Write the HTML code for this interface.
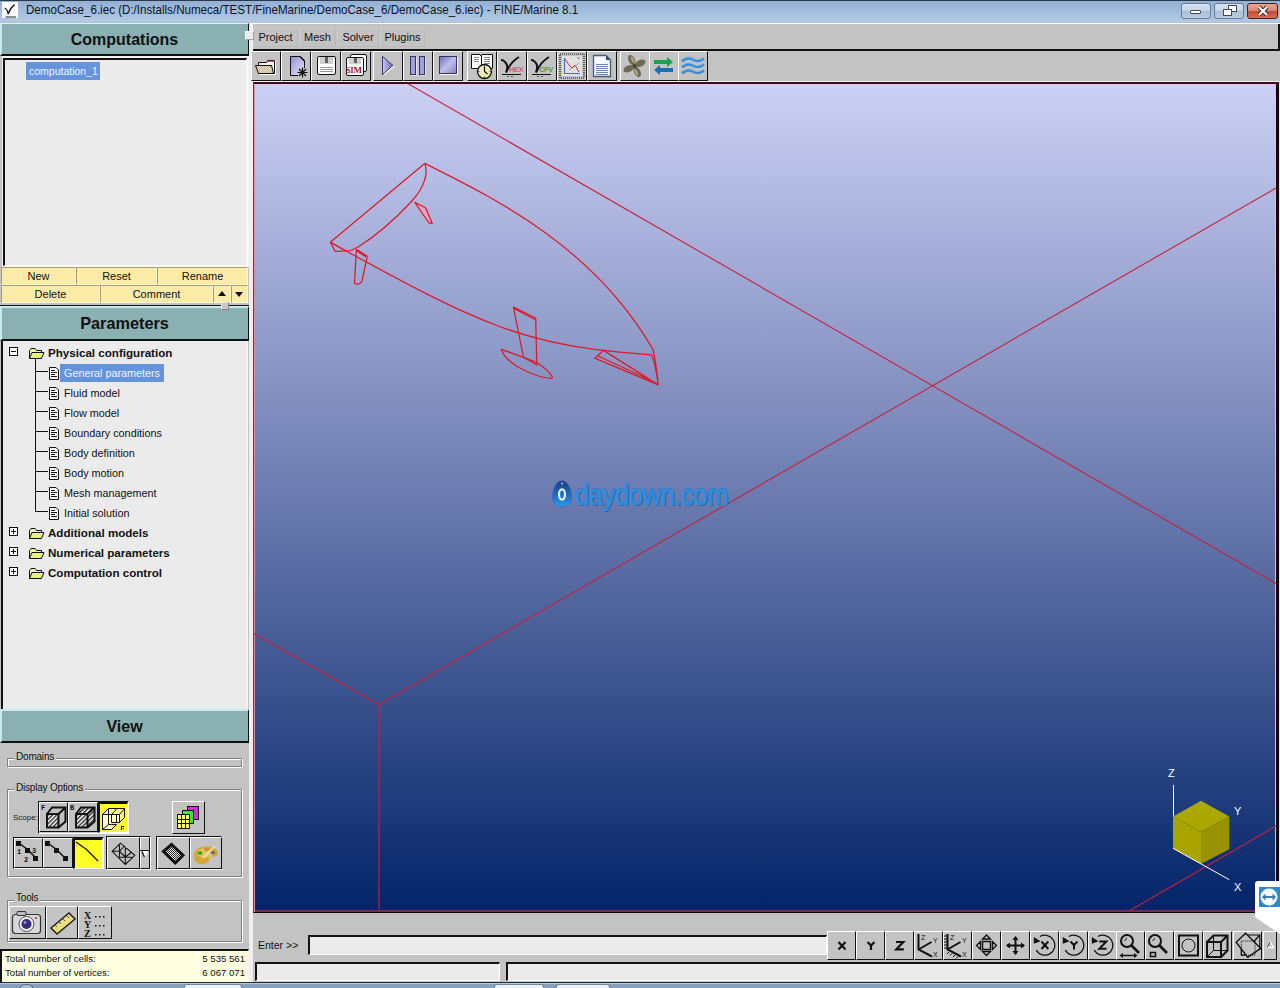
<!DOCTYPE html>
<html><head><meta charset="utf-8">
<style>
*{margin:0;padding:0;box-sizing:border-box}
html,body{width:1280px;height:988px;overflow:hidden;background:#c3c3c3;font-family:"Liberation Sans",sans-serif;position:relative}
.a{position:absolute}
.t{position:absolute;white-space:nowrap;color:#111;font-size:11px;line-height:13px}
.yb{position:absolute;height:18px;background:#fdeba8;border-top:1px solid #a89c70;border-left:1px solid #a89c70;border-right:1px solid #fff8d8;border-bottom:1px solid #fff8d8;font-size:11px;line-height:16px;text-align:center;color:#111}
.gb{position:absolute;border:1px solid #808080;box-shadow:inset 1px 1px 0 #fff,1px 1px 0 #fff}
.mi{position:absolute;top:27px;height:20px;border:1px solid #cdcdcd;border-right-color:#bababa;border-bottom-color:#bababa;font-size:11px;line-height:18px;text-align:center;color:#111}
.tb{position:absolute;top:51px;width:30px;height:30px;background:#c3c3c3;border-top:1px solid #fff;border-left:1px solid #fff;border-right:1px solid #111;border-bottom:1px solid #111;box-shadow:inset -1px -1px 0 #808080}
.cb{position:absolute;top:930px;width:29px;height:30px;background:#c3c3c3;border-top:1px solid #fff;border-left:1px solid #fff;border-right:1px solid #111;border-bottom:1px solid #111;box-shadow:inset -1px -1px 0 #808080}
.ib{position:absolute;background:#c3c3c3;border-top:1px solid #fff;border-left:1px solid #fff;border-right:1px solid #111;border-bottom:1px solid #111;box-shadow:inset -1px -1px 0 #808080}
.ib svg,.tb svg,.cb svg{position:absolute;left:0;top:0}
</style></head><body>

<!-- TITLE BAR -->
<div class="a" style="left:0;top:0;width:1280px;height:23px;background:linear-gradient(#93b0d2,#a2bcdc 45%,#b4cbe6);border-top:1px solid #2a3a4c"></div>
<div class="a" style="left:2px;top:2px;width:16px;height:16px;background:#fff"></div>
<svg class="a" style="left:2px;top:2px" width="16" height="16"><path d="M2.5 6 C4 6.5 5.5 8.5 6.5 12" stroke="#111" stroke-width="1.3" fill="none"/><path d="M6 12 C7.5 8 9.5 5 12.5 2.5" stroke="#111" stroke-width="1.6" fill="none"/><path d="M3.5 15 H14" stroke="#333" stroke-width="1.1"/></svg>
<div class="t" style="left:26px;top:3px;font-size:11.9px;line-height:14px;color:#0c1424;transform:scaleX(0.975);transform-origin:0 0">DemoCase_6.iec (D:/Installs/Numeca/TEST/FineMarine/DemoCase_6/DemoCase_6.iec) - FINE/Marine 8.1</div>
<!-- window buttons -->
<div class="a" style="left:1181px;top:3px;width:30px;height:16px;border:1px solid #6a7c94;border-radius:3px;background:linear-gradient(#d6e2f0 0%,#c8d8ea 45%,#a8bed8 50%,#b8cce2 100%)"></div>
<div class="a" style="left:1190px;top:10px;width:11px;height:4px;background:#fff;border:1px solid #404a58;border-radius:1px"></div>
<div class="a" style="left:1214px;top:3px;width:30px;height:16px;border:1px solid #6a7c94;border-radius:3px;background:linear-gradient(#d6e2f0 0%,#c8d8ea 45%,#a8bed8 50%,#b8cce2 100%)"></div>
<div class="a" style="left:1228px;top:5px;width:9px;height:7px;background:#fff;border:1px solid #404a58"></div>
<div class="a" style="left:1223px;top:9px;width:9px;height:7px;background:#fff;border:1px solid #404a58"></div>
<div class="a" style="left:1247px;top:3px;width:31px;height:16px;border:1px solid #4a2018;border-radius:3px;background:linear-gradient(#e8a498 0%,#dc8a78 45%,#c64a30 55%,#d8705a 100%)"></div>
<svg class="a" style="left:1255px;top:5px" width="16" height="12"><path d="M4 2 L12 10 M12 2 L4 10" stroke="#3a1a14" stroke-width="4"/><path d="M4 2 L12 10 M12 2 L4 10" stroke="#fff" stroke-width="2.4"/></svg>

<!-- SPLITTER -->
<div class="a" style="left:249px;top:23px;width:4px;height:959px;background:#efefef;border-right:1px solid #fbeaea"></div>


<!-- MENU BAR -->
<div class="a" style="left:253px;top:23px;width:1027px;height:28px;background:#c3c3c3;border-top:1px solid #f4f4f4;border-bottom:2px solid #111;border-right:2px solid #111"></div>
<div class="mi" style="left:253px;width:45px">Project</div>
<div class="mi" style="left:299px;width:37px">Mesh</div>
<div class="mi" style="left:337px;width:42px">Solver</div>
<div class="mi" style="left:380px;width:45px">Plugins</div>

<!-- TOOLBAR -->
<div class="a" style="left:253px;top:51px;width:1027px;height:31px;background:#c3c3c3"></div>

<!-- TOOLBAR BUTTONS -->
<div class="a" style="left:251px;top:51px;width:30px;height:30px;background:#c3c3c3;border-top:1px solid #fff;border-left:1px solid #fff;border-right:1px solid #111;border-bottom:1px solid #111"></div><svg class="a" style="left:251px;top:51px" width="30" height="30"><defs><pattern id="chk" width="2" height="2" patternUnits="userSpaceOnUse"><rect width="2" height="2" fill="#e8dcc8"/><rect width="1" height="1" fill="#c8b8a0"/><rect x="1" y="1" width="1" height="1" fill="#c8b8a0"/></pattern></defs>
<path d="M8.5 23.5 H24.5 V10" stroke="#fff" fill="none"/><path d="M7.5 14.5 V11.5 H15.5 L16.5 10 H23.5 V22.5 H7.5 Z" fill="#f4f0ea" stroke="#111"/><path d="M16.5 9.5 H23.5" stroke="#6a2828" stroke-width="1.3"/>
<path d="M4.5 14.5 H20.5 L22.5 22.5 H7.5 Z" fill="url(#chk)" stroke="#111"/></svg>
<div class="a" style="left:281px;top:51px;width:30px;height:30px;background:#c3c3c3;border-top:1px solid #fff;border-left:1px solid #fff;border-right:1px solid #111;border-bottom:1px solid #111"></div><svg class="a" style="left:281px;top:51px" width="30" height="30"><defs><linearGradient id="ndg" x1="0" y1="0" x2="1" y2="1"><stop offset="0" stop-color="#9090d0"/><stop offset="1" stop-color="#e8e8ff"/></linearGradient></defs>
<path d="M9.5 5.5 H19 L23.5 10 V24.5 H9.5 Z" fill="url(#ndg)" stroke="#111"/><path d="M19 5.5 L23.5 10" stroke="#111" stroke-width="1.5"/>
<rect x="17" y="17" width="9" height="9" fill="#c3c3c3"/><path d="M21.5 16.5 V26.5 M16.5 21.5 H26.5 M18 18 L25 25 M25 18 L18 25" stroke="#111" stroke-width="1.2"/></svg>
<div class="a" style="left:311px;top:51px;width:30px;height:30px;background:#c3c3c3;border-top:1px solid #fff;border-left:1px solid #fff;border-right:1px solid #111;border-bottom:1px solid #111"></div><svg class="a" style="left:311px;top:51px" width="30" height="30"><rect x="6.5" y="5.5" width="18" height="18" rx="1.5" fill="#fff" stroke="#111"/><rect x="9" y="6" width="13" height="7" fill="#d0d0d0"/><rect x="14" y="6" width="3" height="6" fill="#606060"/><path d="M9 16.5 H22 M9 18.5 H22 M9 20.5 H22" stroke="#999"/></svg>
<div class="a" style="left:341px;top:51px;width:30px;height:30px;background:#c3c3c3;border-top:1px solid #fff;border-left:1px solid #fff;border-right:1px solid #111;border-bottom:1px solid #111"></div><svg class="a" style="left:341px;top:51px" width="30" height="30"><rect x="9.5" y="3.5" width="16" height="17" rx="1.5" fill="#fff" stroke="#111"/><rect x="5.5" y="6.5" width="17" height="18" rx="1.5" fill="#fff" stroke="#111"/><rect x="8" y="7" width="12" height="6" fill="#d0d0d0"/><rect x="13" y="7" width="3" height="5" fill="#606060"/>
<text x="4.5" y="22" font-family="Liberation Serif" font-weight="bold" font-size="9" fill="#9a1830" letter-spacing="-0.3">SIM</text></svg>
<div class="a" style="left:373px;top:51px;width:30px;height:30px;background:#c3c3c3;border-top:1px solid #fff;border-left:1px solid #fff;border-right:1px solid #111;border-bottom:1px solid #111"></div><svg class="a" style="left:373px;top:51px" width="30" height="30"><defs><linearGradient id="pg" x1="0" y1="0" x2="1" y2="0"><stop offset="0" stop-color="#c8c8f0"/><stop offset="1" stop-color="#6a6aa8"/></linearGradient></defs>
<path d="M10 7 L20.5 14.5 L10 23 Z" fill="#fff" transform="translate(1,1)"/><path d="M9.5 5.5 L20 14.5 L9.5 23.5 Z" fill="url(#pg)" stroke="#33336a"/></svg>
<div class="a" style="left:403px;top:51px;width:30px;height:30px;background:#c3c3c3;border-top:1px solid #fff;border-left:1px solid #fff;border-right:1px solid #111;border-bottom:1px solid #111"></div><svg class="a" style="left:403px;top:51px" width="30" height="30"><rect x="8.5" y="6.5" width="5" height="18" fill="#fff"/><rect x="17.5" y="6.5" width="5" height="18" fill="#fff"/><rect x="7.5" y="5.5" width="5" height="18" fill="#9ea0d8" stroke="#33336a"/><rect x="16.5" y="5.5" width="5" height="18" fill="#9ea0d8" stroke="#33336a"/></svg>
<div class="a" style="left:433px;top:51px;width:30px;height:30px;background:#c3c3c3;border-top:1px solid #fff;border-left:1px solid #fff;border-right:1px solid #111;border-bottom:1px solid #111"></div><svg class="a" style="left:433px;top:51px" width="30" height="30"><defs><linearGradient id="sg" x1="0" y1="0" x2="1" y2="1"><stop offset="0" stop-color="#6a6aa8"/><stop offset="0.5" stop-color="#c0c0ee"/><stop offset="1" stop-color="#8080c0"/></linearGradient></defs>
<rect x="7" y="6" width="18" height="18" fill="#fff"/><rect x="6.5" y="5.5" width="17" height="17" fill="url(#sg)" stroke="#33336a"/></svg>
<div class="a" style="left:467px;top:51px;width:30px;height:30px;background:#c3c3c3;border-top:1px solid #fff;border-left:1px solid #fff;border-right:1px solid #111;border-bottom:1px solid #111"></div><svg class="a" style="left:467px;top:51px" width="30" height="30"><path d="M4.5 3.5 H13 L14 5 L15 3.5 H25.5 V17.5 H4.5 Z" fill="#fff" stroke="#111"/><path d="M14.5 5 V17" stroke="#111"/><path d="M7 6.5 H12 M7 8.5 H12 M7 10.5 H12 M17 6.5 H23 M17 8.5 H23 M17 10.5 H23 M17 12.5 H23" stroke="#888"/>
<circle cx="17.5" cy="20.5" r="7" fill="#eeeab0" stroke="#111" stroke-width="1.3"/><path d="M17.5 15.5 V20.5 L20.5 23" stroke="#111" stroke-width="1.2" fill="none"/><circle cx="17.5" cy="14.8" r=".6" fill="#111"/><circle cx="23.2" cy="20.5" r=".6" fill="#111"/><circle cx="11.8" cy="20.5" r=".6" fill="#111"/><circle cx="17.5" cy="26.2" r=".6" fill="#111"/></svg>
<div class="a" style="left:497px;top:51px;width:30px;height:30px;background:#c3c3c3;border-top:1px solid #fff;border-left:1px solid #fff;border-right:1px solid #111;border-bottom:1px solid #111"></div><svg class="a" style="left:497px;top:51px" width="30" height="30"><path d="M4 9 C6 9 8 10 10 14 C10.5 16 10 19 9 21.5 C11 17 15 10 22 6" stroke="#111" stroke-width="2" fill="none"/>
<text x="12" y="21" font-family="Liberation Sans" font-weight="bold" font-size="7.5" fill="#d86070" letter-spacing="-0.4">HEX</text><path d="M5 23.5 H24" stroke="#111" stroke-width="1"/><path d="M10 25.5 H12 M14 25.5 H16" stroke="#555"/></svg>
<div class="a" style="left:527px;top:51px;width:30px;height:30px;background:#c3c3c3;border-top:1px solid #fff;border-left:1px solid #fff;border-right:1px solid #111;border-bottom:1px solid #111"></div><svg class="a" style="left:527px;top:51px" width="30" height="30"><path d="M4 9 C6 9 8 10 10 14 C10.5 16 10 19 9 21.5 C11 17 15 10 22 6" stroke="#111" stroke-width="2" fill="none"/>
<text x="12" y="21" font-family="Liberation Sans" font-weight="bold" font-size="7.5" fill="#5a9a40" letter-spacing="-0.4">CFV</text><path d="M5 23.5 H24" stroke="#111" stroke-width="1"/><path d="M10 25.5 H12 M14 25.5 H16" stroke="#555"/></svg>
<div class="a" style="left:557px;top:51px;width:30px;height:30px;background:#c3c3c3;border-top:1px solid #fff;border-left:1px solid #fff;border-right:1px solid #111;border-bottom:1px solid #111"></div><svg class="a" style="left:557px;top:51px" width="30" height="30"><rect x="3" y="3" width="24" height="24" fill="none" stroke="#111" stroke-width="1.2" stroke-dasharray="1 1"/><rect x="5" y="5" width="20" height="20" fill="#e0e0e0"/><path d="M7.5 7 V22.5 H23" stroke="#4a6ac8" stroke-width="1.2" fill="none"/><path d="M8 8 L12 14 L15 17 L18 14 L22 21" stroke="#d03030" stroke-width="1" fill="none"/><path d="M12 19 L17 16 L22 12" stroke="#a0a0a0" fill="none"/><path d="M20 7 H23" stroke="#777"/></svg>
<div class="a" style="left:587px;top:51px;width:30px;height:30px;background:#c3c3c3;border-top:1px solid #fff;border-left:1px solid #fff;border-right:1px solid #111;border-bottom:1px solid #111"></div><svg class="a" style="left:587px;top:51px" width="30" height="30"><path d="M6.5 4.5 H19 L23.5 9 V25.5 H6.5 Z" fill="#f4f8ff" stroke="#4a5a7a" stroke-width="1.3"/><path d="M19 4.5 V9 H23.5 Z" fill="#2a4a8a"/><path d="M9 13.5 H21 M9 15.5 H21 M9 17.5 H21 M9 19.5 H21 M9 21.5 H21 M9 23.5 H21" stroke="#6a88b8" stroke-width="1"/></svg>
<div class="a" style="left:620px;top:51px;width:30px;height:30px;background:#c3c3c3;border-top:1px solid #fff;border-left:1px solid #fff;border-right:1px solid #111;border-bottom:1px solid #111"></div><svg class="a" style="left:620px;top:51px" width="30" height="30"><g transform="rotate(-25 14.5 15)"><g fill="#6e6a52"><ellipse cx="14.5" cy="8.5" rx="3.2" ry="5.5"/><ellipse cx="14.5" cy="21.5" rx="3.2" ry="5.5"/><ellipse cx="8" cy="15" rx="5.5" ry="3.2"/><ellipse cx="21" cy="15" rx="5.5" ry="3.2"/></g><g fill="#aca68a"><ellipse cx="15.5" cy="8.5" rx="1.3" ry="3.5"/><ellipse cx="13.5" cy="21.5" rx="1.3" ry="3.5"/></g></g><circle cx="14.5" cy="15" r="2" fill="#4a4630"/></svg>
<div class="a" style="left:649px;top:51px;width:30px;height:30px;background:#c3c3c3;border-top:1px solid #fff;border-left:1px solid #fff;border-right:1px solid #111;border-bottom:1px solid #111"></div><svg class="a" style="left:649px;top:51px" width="30" height="30"><path d="M5 9 H18 V6 L24 11 L18 16 V13 H5 Z" fill="#1aa050"/><path d="M24 17 H11 V14 L5 19 L11 24 V21 H24 Z" fill="#1a70b8"/></svg>
<div class="a" style="left:678px;top:51px;width:30px;height:30px;background:#c3c3c3;border-top:1px solid #fff;border-left:1px solid #fff;border-right:1px solid #111;border-bottom:1px solid #111"></div><svg class="a" style="left:678px;top:51px" width="30" height="30"><g stroke="#3a8cd4" stroke-width="3" fill="none" stroke-linecap="round"><path d="M5 9.5 C8 7 11 6.5 15 8.5 C19 10.5 22 10 25 8"/><path d="M5 15.5 C8 13 11 12.5 15 14.5 C19 16.5 22 16 25 14"/><path d="M5 21.5 C8 19 11 18.5 15 20.5 C19 22.5 22 22 25 20"/></g><g stroke="#80c4f8" stroke-width=".9" fill="none"><path d="M5 8.3 C8 5.8 11 5.3 15 7.3 C19 9.3 22 8.8 25 6.8"/><path d="M5 14.3 C8 11.8 11 11.3 15 13.3 C19 15.3 22 14.8 25 12.8"/><path d="M5 20.3 C8 17.8 11 17.3 15 19.3 C19 21.3 22 20.8 25 18.8"/></g></svg>

<div class="a" style="left:253px;top:81px;width:1026px;height:1px;background:#fcf4f4"></div>
<!-- VIEWPORT -->
<div class="a" style="left:253px;top:82px;width:1026px;height:831px;background:linear-gradient(#ccd0f4 0%,#6b7baf 50%,#032468 100%);border-top:2px solid #420818;border-left:1px solid #a82040;border-right:3px solid #1a0408;border-bottom:1px solid #080004;box-shadow:inset 0 1px 0 #e6c6e6,inset 1px 0 0 #d88aa8,inset -1px 0 0 #dcc0e0,inset 0 -2px 0 #7a2a4a"></div>
<div class="a" style="left:1279px;top:82px;width:1px;height:831px;background:#f8e0e0"></div>

<!-- VIEWPORT CONTENT -->
<svg class="a" style="left:254px;top:84px" width="1022" height="827" viewBox="254 84 1022 827">
<g stroke="#c8203c" stroke-width="1.1" fill="none">
<path d="M407.7 83.5 L1276 583.5"/>
<path d="M253 633 L379 704.5 L1276 188"/>
<path d="M379 704.5 V912"/>
<path d="M1129 911 L1276 826"/>
</g>
<g stroke="#dc1a28" stroke-width="1.25" fill="none" stroke-linejoin="round">
<!-- transom top edge -->
<path d="M424.7 163.4 L330.3 242.3 L335.2 251.4 L345.8 251"/>
<path d="M330.3 242.3 L345.8 251"/>
<!-- transom curve -->
<path d="M424.7 163.4 C428 172 426 186 411 202 C398 216 382 232 358 247 C353 250 349 251 345.8 251"/>
<!-- deck edge -->
<path d="M424.7 163.4 C489 195.8 592 243.9 653 349.5"/>
<!-- keel line -->
<path d="M330.3 242.3 C484.5 327.1 523.8 345.8 651.5 354.8"/>
<!-- bow -->
<path d="M653 349.5 C655.5 360 657 372 658.2 384.9 M651.5 354.8 C654 360 656.5 372 658.2 384.9"/>
<!-- bulb -->
<path d="M603.6 350.4 L594.7 358.2 L658.2 384.9 L603.6 350.4 M598 356 L650 380"/>
<!-- rudder -->
<path d="M356.4 249.4 L367.3 256.2 L362 281 C361 284 357 285 354.5 283 L356.4 249.4 M357 251 L366 257"/>
<!-- small fin -->
<path d="M414.8 202.4 L425.5 207.7 L432.3 223.6 L429 223 Z" fill="#e6a8c0"/>
<!-- keel fin -->
<path d="M513.4 307 L535.7 318 L536.8 364.9 L523.4 357 Z M514 308.5 L535 319.5"/>
<!-- fin bulb -->
<path d="M501.2 349.3 L536 362 C545 368 552 374 552.4 378.2 C545 379 530 374 518 367 C510 362 503 355 501.2 349.3 Z"/>
</g>
<!-- gizmo -->
<g>
<path d="M1201 800.7 L1229.3 816.5 L1201 832 L1173 816.5 Z" fill="#aaa800"/>
<path d="M1173 816.5 L1201 832 L1201 863.9 L1173 848.3 Z" fill="#a8a400"/>
<path d="M1229.3 816.5 L1229.3 849.3 L1201 863.9 L1201 832 Z" fill="#979300"/>
<path d="M1173.5 785 V816.5 M1173 848.3 L1229.3 879.7" stroke="#fff" stroke-width="1" fill="none"/>
<text x="1168" y="777" fill="#fff" font-size="11" font-family="Liberation Sans">Z</text>
<text x="1234" y="815" fill="#fff" font-size="11" font-family="Liberation Sans">Y</text>
<text x="1234" y="891" fill="#fff" font-size="11" font-family="Liberation Sans">X</text>
</g>
</svg>

<!-- WATERMARK -->
<svg class="a" style="left:550px;top:478px" width="22" height="31"><defs><linearGradient id="egg" x1="0" y1="0" x2="0" y2="1"><stop offset="0" stop-color="#16407e"/><stop offset="0.55" stop-color="#1f6cc0"/><stop offset="1" stop-color="#2e9ae8"/></linearGradient></defs><path d="M12 2.5 C6 2.5 2.5 12 2.5 19 C2.5 25.5 6.5 28.8 12 28.8 C17.5 28.8 21.8 25.5 21.8 19 C21.8 12 18 2.5 12 2.5 Z" fill="url(#egg)" stroke="#3a6ab0" stroke-width=".8"/><ellipse cx="12" cy="16.5" rx="3" ry="5.2" fill="none" stroke="#e0f2ff" stroke-width="2.2"/><circle cx="12" cy="5.5" r="1" fill="#e0a0e0"/></svg>
<div class="t" style="left:575px;top:479px;font-size:29px;line-height:32px;font-weight:normal;color:#2f92e2;letter-spacing:-0.6px;transform:scaleX(0.89);transform-origin:0 0;-webkit-text-stroke:0.9px #2f8ad8;text-shadow:1px 1px 0 #34589a,-0.6px -0.6px 0 #3a70b8">daydown.com</div>

<!-- COMMAND AREA -->
<div class="a" style="left:253px;top:913px;width:1027px;height:69px;background:#c3c3c3"></div>
<div class="t" style="left:258px;top:939px;font-size:10.5px">Enter &gt;&gt;</div>
<div class="a" style="left:308px;top:935px;width:519px;height:20px;background:#ebebeb;border-top:2px solid #111;border-left:2px solid #111;border-right:1px solid #fff;border-bottom:1px solid #fff"></div>
<div class="a" style="left:255px;top:962px;width:245px;height:19px;background:#ebebeb;border-top:2px solid #111;border-left:2px solid #111;border-right:1px solid #fff;border-bottom:1px solid #fff"></div>
<div class="a" style="left:506px;top:962px;width:774px;height:19px;background:#ebebeb;border-top:2px solid #111;border-left:2px solid #111;border-bottom:1px solid #fff"></div>

<!-- COMMAND BUTTONS -->
<div class="a" style="left:827px;top:931px;width:29px;height:29px;background:#c3c3c3;border-top:1px solid #fff;border-left:1px solid #fff;border-right:1px solid #111;border-bottom:1px solid #111"></div><svg class="a" style="left:827px;top:931px" width="29" height="29"><path d="M11.5 11 L18.5 18.5 M18.5 11 L11.5 18.5" stroke="#111" stroke-width="2.2" fill="none" stroke-linejoin="miter"/></svg>
<div class="a" style="left:856px;top:931px;width:29px;height:29px;background:#c3c3c3;border-top:1px solid #fff;border-left:1px solid #fff;border-right:1px solid #111;border-bottom:1px solid #111"></div><svg class="a" style="left:856px;top:931px" width="29" height="29"><path d="M11.5 11 L15 14.5 L18.5 11 M15 14.5 V19" stroke="#111" stroke-width="2.2" fill="none" stroke-linejoin="miter"/></svg>
<div class="a" style="left:885px;top:931px;width:29px;height:29px;background:#c3c3c3;border-top:1px solid #fff;border-left:1px solid #fff;border-right:1px solid #111;border-bottom:1px solid #111"></div><svg class="a" style="left:885px;top:931px" width="29" height="29"><path d="M11 11 H18.3 L11.3 18.3 H18.8" stroke="#111" stroke-width="2.2" fill="none" stroke-linejoin="miter"/></svg>
<div class="a" style="left:914px;top:931px;width:29px;height:29px;background:#c3c3c3;border-top:1px solid #fff;border-left:1px solid #fff;border-right:1px solid #111;border-bottom:1px solid #111"></div><svg class="a" style="left:914px;top:931px" width="29" height="29"><path d="M4.5 3 V18.5 L18 25.5 M4.5 18.5 L17.5 11" stroke="#111" stroke-width="2" fill="none"/><g font-family="Liberation Sans" font-size="7" fill="#111"><text x="7" y="9">Z</text><text x="19" y="12">Y</text><text x="19" y="26">X</text></g></svg>
<div class="a" style="left:943px;top:931px;width:29px;height:29px;background:#c3c3c3;border-top:1px solid #fff;border-left:1px solid #fff;border-right:1px solid #111;border-bottom:1px solid #111"></div><svg class="a" style="left:943px;top:931px" width="29" height="29"><path d="M4.5 3 V18.5 L18 25.5 M4.5 18.5 L17.5 11" stroke="#111" stroke-width="2" fill="none"/><g font-family="Liberation Sans" font-size="7" fill="#111"><text x="7" y="9">Z</text><text x="19" y="12">Y</text><text x="19" y="26">X</text></g><path d="M1 5 H4 M1 8 H4 M1 11 H4 M1 14 H4 M1 17 H4 M6 21 L4 23 M9 22.5 L7 24.5 M12 24 L10 26 M15 25.5 L13 27.5" stroke="#111" stroke-width="1"/></svg>
<div class="a" style="left:972px;top:931px;width:29px;height:29px;background:#c3c3c3;border-top:1px solid #fff;border-left:1px solid #fff;border-right:1px solid #111;border-bottom:1px solid #111"></div><svg class="a" style="left:972px;top:931px" width="29" height="29"><rect x="10.5" y="10.5" width="8" height="8" fill="none" stroke="#111" stroke-width="1.5"/><path d="M14.5 4 L18.5 8 H10.5 Z M14.5 24.5 L18.5 20.5 H10.5 Z M4.5 14.5 L8.5 10.5 V18.5 Z M24.5 14.5 L20.5 10.5 V18.5 Z" fill="none" stroke="#111" stroke-width="1.3"/></svg>
<div class="a" style="left:1001px;top:931px;width:29px;height:29px;background:#c3c3c3;border-top:1px solid #fff;border-left:1px solid #fff;border-right:1px solid #111;border-bottom:1px solid #111"></div><svg class="a" style="left:1001px;top:931px" width="29" height="29"><path d="M14.5 6 V23 M6 14.5 H23" stroke="#111" stroke-width="2"/><path d="M14.5 5 L11.5 9 H17.5 Z M14.5 24 L11.5 20 H17.5 Z M5 14.5 L9 11.5 V17.5 Z M24 14.5 L20 11.5 V17.5 Z" fill="#111"/></svg>
<div class="a" style="left:1030px;top:931px;width:29px;height:29px;background:#c3c3c3;border-top:1px solid #fff;border-left:1px solid #fff;border-right:1px solid #111;border-bottom:1px solid #111"></div><svg class="a" style="left:1030px;top:931px" width="29" height="29"><path d="M6.2 19.2 A10 10 0 1 0 9.9 5.5" fill="none" stroke="#111" stroke-width="1.3"/><path d="M3.8 6 L10.5 10.2 L3.8 12.7 Z" fill="#111"/><path d="M11.5 10.5 L18.3 18 M18.3 10.5 L11.5 18" stroke="#111" stroke-width="2" fill="none"/></svg>
<div class="a" style="left:1059px;top:931px;width:29px;height:29px;background:#c3c3c3;border-top:1px solid #fff;border-left:1px solid #fff;border-right:1px solid #111;border-bottom:1px solid #111"></div><svg class="a" style="left:1059px;top:931px" width="29" height="29"><path d="M6.2 19.2 A10 10 0 1 0 9.9 5.5" fill="none" stroke="#111" stroke-width="1.3"/><path d="M3.8 6 L10.5 10.2 L3.8 12.7 Z" fill="#111"/><path d="M11.5 10.5 L15 14 L18.5 10.5 M15 14 V18.5" stroke="#111" stroke-width="2" fill="none"/></svg>
<div class="a" style="left:1088px;top:931px;width:29px;height:29px;background:#c3c3c3;border-top:1px solid #fff;border-left:1px solid #fff;border-right:1px solid #111;border-bottom:1px solid #111"></div><svg class="a" style="left:1088px;top:931px" width="29" height="29"><path d="M6.2 19.2 A10 10 0 1 0 9.9 5.5" fill="none" stroke="#111" stroke-width="1.3"/><path d="M3.8 6 L10.5 10.2 L3.8 12.7 Z" fill="#111"/><path d="M11.3 10.5 H18.3 L11.3 17.8 H18.5" stroke="#111" stroke-width="2" fill="none"/></svg>
<div class="a" style="left:1116px;top:931px;width:29px;height:29px;background:#c3c3c3;border-top:1px solid #fff;border-left:1px solid #fff;border-right:1px solid #111;border-bottom:1px solid #111"></div><svg class="a" style="left:1116px;top:931px" width="29" height="29"><circle cx="11" cy="10" r="6" fill="none" stroke="#111" stroke-width="2"/><path d="M8.5 10 L11 7" stroke="#111" stroke-width="1"/><path d="M15 14 L23 22" stroke="#111" stroke-width="2.6"/><path d="M5 24.5 H20" stroke="#111" stroke-width="1.5"/><path d="M3.5 24.5 L7 22 V27 Z M21.5 24.5 L18 22 V27 Z" fill="#111"/></svg>
<div class="a" style="left:1145px;top:931px;width:29px;height:29px;background:#c3c3c3;border-top:1px solid #fff;border-left:1px solid #fff;border-right:1px solid #111;border-bottom:1px solid #111"></div><svg class="a" style="left:1145px;top:931px" width="29" height="29"><circle cx="10" cy="10" r="6" fill="none" stroke="#111" stroke-width="2"/><path d="M7.5 10 L10 7" stroke="#111" stroke-width="1"/><path d="M14 14 L22 22" stroke="#111" stroke-width="2.6"/><rect x="5.5" y="21.5" width="5" height="4" fill="none" stroke="#111" stroke-width="1.5"/></svg>
<div class="a" style="left:1174px;top:931px;width:29px;height:29px;background:#c3c3c3;border-top:1px solid #fff;border-left:1px solid #fff;border-right:1px solid #111;border-bottom:1px solid #111"></div><svg class="a" style="left:1174px;top:931px" width="29" height="29"><rect x="5" y="4.5" width="19" height="20" fill="none" stroke="#111" stroke-width="2"/><circle cx="14.5" cy="14.5" r="6.5" fill="none" stroke="#111" stroke-width="1"/></svg>
<div class="a" style="left:1203px;top:931px;width:29px;height:29px;background:#c3c3c3;border-top:1px solid #fff;border-left:1px solid #fff;border-right:1px solid #111;border-bottom:1px solid #111"></div><svg class="a" style="left:1203px;top:931px" width="29" height="29"><path d="M4 11 H18 V26 H4 Z M4 11 L10.5 4.5 H24.5 V19.5 L18 26 M18 11 L24.5 4.5" fill="none" stroke="#111" stroke-width="2"/><path d="M10.5 4.5 V19.5 H24.5 M10.5 19.5 L4 26" fill="none" stroke="#111" stroke-width="1"/></svg>
<div class="a" style="left:1233px;top:931px;width:29px;height:29px;background:#c3c3c3;border-top:1px solid #fff;border-left:1px solid #fff;border-right:1px solid #111;border-bottom:1px solid #111"></div><svg class="a" style="left:1233px;top:931px" width="29" height="29"><path d="M14.8 4 H26.8 V19 M20.8 10.5 L26.8 4 M8.3 17.3 V24.2 H12.6" fill="none" stroke="#111" stroke-width="1.2"/><path d="M3.2 11.3 L12.6 2.3 L27.6 17.3 L14.8 26.4 Z" fill="none" stroke="#111" stroke-width="1.4"/><path d="M8.3 10 H22 V24.2 H8.3 Z" fill="none" stroke="#111" stroke-width="1" stroke-dasharray="1 1"/></svg>
<div class="a" style="left:1263px;top:931px;width:14px;height:29px;background:#c3c3c3;border-top:1px solid #fff;border-left:1px solid #fff;border-right:1px solid #111;border-bottom:1px solid #111"></div><svg class="a" style="left:1263px;top:931px" width="14" height="29"><path d="M3.5 16.5 L7 10.5 L10.5 16.5 Z" fill="none" stroke="#fff" stroke-width="1.3"/><path d="M4 16.5 L7 11" stroke="#333" stroke-width="1"/></svg>
<svg class="a" style="left:1254px;top:880px" width="26" height="55"><path d="M1 4 Q1 1 4 1 H26 V54 L14 46 L1 37 Z" fill="#fff"/><rect x="5" y="7" width="21" height="20" fill="#2a8ad0"/><circle cx="15" cy="17" r="8.5" fill="#f4faff"/><path d="M9 17 H21" stroke="#3a7ac0" stroke-width="2"/><path d="M8 17 L11.5 13.5 V20.5 Z M22 17 L18.5 13.5 V20.5 Z" fill="#3a7ac0"/></svg>

<!-- BOTTOM STRIP -->
<div class="a" style="left:0;top:982px;width:1280px;height:6px;background:#86a0be;border-top:1px solid #2a2a2a"></div>
<div class="a" style="left:0;top:983px;width:1280px;height:1px;background:#b8c8d8"></div>
<div class="a" style="left:19px;top:984px;width:15px;height:6px;border-radius:8px 8px 0 0;background:#a8bcd4;border:1px solid #5a7090"></div>
<div class="a" style="left:184px;top:984px;width:58px;height:4px;background:#eef2f6;border-radius:3px 3px 0 0;border:1px solid #7088a8;border-bottom:none"></div>
<div class="a" style="left:494px;top:984px;width:50px;height:4px;background:#eef2f6;border-radius:3px 3px 0 0;border:1px solid #7088a8;border-bottom:none"></div>
<div class="a" style="left:556px;top:984px;width:54px;height:4px;background:#eef2f6;border-radius:3px 3px 0 0;border:1px solid #7088a8;border-bottom:none"></div>

<div class="a" style="left:0;top:22px;width:1280px;height:1px;background:#b4c0cc"></div>
<div class="a" style="left:0;top:23px;width:1280px;height:1px;background:#fafafa"></div>
<!-- LEFT PANEL -->
<div class="a" style="left:0;top:23px;width:249px;height:959px;background:#c3c3c3"></div>
<!-- Computations header -->
<div class="a" style="left:0;top:23px;width:249px;height:33px;background:#8ab0b2;border-top:1px solid #d8f4f4;border-left:2px solid #c8eaea;border-right:1px solid #111;border-bottom:2px solid #111"></div>
<div class="t" style="left:0;top:30px;width:249px;text-align:center;font-size:16px;line-height:20px;font-weight:bold">Computations</div>
<!-- list -->
<div class="a" style="left:2px;top:56px;width:247px;height:211px;background:#f4f4f4"></div>
<div class="a" style="left:3px;top:58px;width:244px;height:208px;background:#ebebeb;border-top:2px solid #111;border-left:2px solid #111;border-right:1px solid #fff;border-bottom:1px solid #fff"></div>
<div class="a" style="left:26px;top:62px;width:74px;height:18px;background:#6694dc"></div>
<div class="t" style="left:29px;top:65px;color:#eef4ff;font-size:10.5px">computation_1</div>

<!-- buttons -->
<div class="a" style="left:1px;top:267px;width:248px;height:38px;background:#c3c3c3"></div>
<div class="yb" style="left:1px;top:267px;width:75px">New</div>
<div class="yb" style="left:76px;top:267px;width:81px">Reset</div>
<div class="yb" style="left:157px;top:267px;width:91px">Rename</div>
<div class="yb" style="left:1px;top:285px;width:99px">Delete</div>
<div class="yb" style="left:100px;top:285px;width:113px">Comment</div>
<div class="yb" style="left:213px;top:285px;width:18px"></div>
<div class="yb" style="left:231px;top:285px;width:17px"></div>
<div class="a" style="left:218px;top:291px;width:0;height:0;border-left:4px solid transparent;border-right:4px solid transparent;border-bottom:5px solid #111"></div>
<div class="a" style="left:235px;top:292px;width:0;height:0;border-left:4px solid transparent;border-right:4px solid transparent;border-top:5px solid #111"></div>
<div class="a" style="left:0;top:305px;width:249px;height:1px;background:#111"></div>

<!-- Parameters header -->
<div class="a" style="left:0;top:306px;width:249px;height:35px;background:#8ab0b2;border-top:2px solid #c8eaea;border-left:2px solid #c8eaea;border-right:1px solid #111;border-bottom:2px solid #111"></div>
<div class="t" style="left:0;top:313px;width:249px;text-align:center;font-size:16.3px;line-height:20px;font-weight:bold">Parameters</div>
<div class="a" style="left:221px;top:302px;width:8px;height:8px;background:#c8c8c8;border:1px solid #e8e8e8;border-right-color:#888;border-bottom-color:#888"></div>
<!-- tree -->
<div class="a" style="left:1px;top:341px;width:247px;height:369px;background:#ebebeb;border-left:2px solid #111;border-right:1px solid #f8f8f8"></div>
<div class="a" style="left:9px;top:347px;width:9px;height:9px;border:1px solid #111;background:#fff"></div><div class="a" style="left:11px;top:351px;width:5px;height:1px;background:#111"></div><svg class="a" style="left:28px;top:347px" width="17" height="13"><path d="M1.5 11.5 V3.5 L3 1.5 H7 L8.5 3.5 H13.5 V5.5" fill="#eef6a0" stroke="#111" stroke-width="1"/><path d="M1.5 11.5 L4 5.5 H16 L13.5 11.5 Z" fill="#e8f080" stroke="#111" stroke-width="1"/></svg><div class="t" style="left:48px;top:346px;font-weight:bold;font-size:11.6px">Physical configuration</div><div class="a" style="left:36px;top:371px;width:12px;height:1px;background:#111"></div><svg class="a" style="left:49px;top:367px" width="11" height="13"><path d="M0.5 0.5 H7 L9.5 3 V12.5 H0.5 Z" fill="#fff" stroke="#111"/><path d="M2 3.5 H6 M2 5.5 H8 M2 7.5 H6 M2 9.5 H8" stroke="#111" stroke-width="1"/></svg><div class="a" style="left:60px;top:364px;width:104px;height:18px;background:#6694dc"></div><div class="t" style="left:64px;top:367px;color:#eef4ff;font-size:10.8px">General parameters</div><div class="a" style="left:36px;top:391px;width:12px;height:1px;background:#111"></div><svg class="a" style="left:49px;top:387px" width="11" height="13"><path d="M0.5 0.5 H7 L9.5 3 V12.5 H0.5 Z" fill="#fff" stroke="#111"/><path d="M2 3.5 H6 M2 5.5 H8 M2 7.5 H6 M2 9.5 H8" stroke="#111" stroke-width="1"/></svg><div class="t" style="left:64px;top:387px;font-size:10.8px">Fluid model</div><div class="a" style="left:36px;top:411px;width:12px;height:1px;background:#111"></div><svg class="a" style="left:49px;top:407px" width="11" height="13"><path d="M0.5 0.5 H7 L9.5 3 V12.5 H0.5 Z" fill="#fff" stroke="#111"/><path d="M2 3.5 H6 M2 5.5 H8 M2 7.5 H6 M2 9.5 H8" stroke="#111" stroke-width="1"/></svg><div class="t" style="left:64px;top:407px;font-size:10.8px">Flow model</div><div class="a" style="left:36px;top:431px;width:12px;height:1px;background:#111"></div><svg class="a" style="left:49px;top:427px" width="11" height="13"><path d="M0.5 0.5 H7 L9.5 3 V12.5 H0.5 Z" fill="#fff" stroke="#111"/><path d="M2 3.5 H6 M2 5.5 H8 M2 7.5 H6 M2 9.5 H8" stroke="#111" stroke-width="1"/></svg><div class="t" style="left:64px;top:427px;font-size:10.8px">Boundary conditions</div><div class="a" style="left:36px;top:451px;width:12px;height:1px;background:#111"></div><svg class="a" style="left:49px;top:447px" width="11" height="13"><path d="M0.5 0.5 H7 L9.5 3 V12.5 H0.5 Z" fill="#fff" stroke="#111"/><path d="M2 3.5 H6 M2 5.5 H8 M2 7.5 H6 M2 9.5 H8" stroke="#111" stroke-width="1"/></svg><div class="t" style="left:64px;top:447px;font-size:10.8px">Body definition</div><div class="a" style="left:36px;top:471px;width:12px;height:1px;background:#111"></div><svg class="a" style="left:49px;top:467px" width="11" height="13"><path d="M0.5 0.5 H7 L9.5 3 V12.5 H0.5 Z" fill="#fff" stroke="#111"/><path d="M2 3.5 H6 M2 5.5 H8 M2 7.5 H6 M2 9.5 H8" stroke="#111" stroke-width="1"/></svg><div class="t" style="left:64px;top:467px;font-size:10.8px">Body motion</div><div class="a" style="left:36px;top:491px;width:12px;height:1px;background:#111"></div><svg class="a" style="left:49px;top:487px" width="11" height="13"><path d="M0.5 0.5 H7 L9.5 3 V12.5 H0.5 Z" fill="#fff" stroke="#111"/><path d="M2 3.5 H6 M2 5.5 H8 M2 7.5 H6 M2 9.5 H8" stroke="#111" stroke-width="1"/></svg><div class="t" style="left:64px;top:487px;font-size:10.8px">Mesh management</div><div class="a" style="left:36px;top:511px;width:12px;height:1px;background:#111"></div><svg class="a" style="left:49px;top:507px" width="11" height="13"><path d="M0.5 0.5 H7 L9.5 3 V12.5 H0.5 Z" fill="#fff" stroke="#111"/><path d="M2 3.5 H6 M2 5.5 H8 M2 7.5 H6 M2 9.5 H8" stroke="#111" stroke-width="1"/></svg><div class="t" style="left:64px;top:507px;font-size:10.8px">Initial solution</div><div class="a" style="left:9px;top:527px;width:9px;height:9px;border:1px solid #111;background:#fff"></div><div class="a" style="left:11px;top:531px;width:5px;height:1px;background:#111"></div><div class="a" style="left:13px;top:529px;width:1px;height:5px;background:#111"></div><svg class="a" style="left:28px;top:527px" width="17" height="13"><path d="M1.5 11.5 V3.5 L3 1.5 H7 L8.5 3.5 H13.5 V5.5" fill="#eef6a0" stroke="#111" stroke-width="1"/><path d="M1.5 11.5 L4 5.5 H16 L13.5 11.5 Z" fill="#e8f080" stroke="#111" stroke-width="1"/></svg><div class="t" style="left:48px;top:526px;font-weight:bold;font-size:11.6px">Additional models</div><div class="a" style="left:9px;top:547px;width:9px;height:9px;border:1px solid #111;background:#fff"></div><div class="a" style="left:11px;top:551px;width:5px;height:1px;background:#111"></div><div class="a" style="left:13px;top:549px;width:1px;height:5px;background:#111"></div><svg class="a" style="left:28px;top:547px" width="17" height="13"><path d="M1.5 11.5 V3.5 L3 1.5 H7 L8.5 3.5 H13.5 V5.5" fill="#eef6a0" stroke="#111" stroke-width="1"/><path d="M1.5 11.5 L4 5.5 H16 L13.5 11.5 Z" fill="#e8f080" stroke="#111" stroke-width="1"/></svg><div class="t" style="left:48px;top:546px;font-weight:bold;font-size:11.6px">Numerical parameters</div><div class="a" style="left:9px;top:567px;width:9px;height:9px;border:1px solid #111;background:#fff"></div><div class="a" style="left:11px;top:571px;width:5px;height:1px;background:#111"></div><div class="a" style="left:13px;top:569px;width:1px;height:5px;background:#111"></div><svg class="a" style="left:28px;top:567px" width="17" height="13"><path d="M1.5 11.5 V3.5 L3 1.5 H7 L8.5 3.5 H13.5 V5.5" fill="#eef6a0" stroke="#111" stroke-width="1"/><path d="M1.5 11.5 L4 5.5 H16 L13.5 11.5 Z" fill="#e8f080" stroke="#111" stroke-width="1"/></svg><div class="t" style="left:48px;top:566px;font-weight:bold;font-size:11.6px">Computation control</div><div class="a" style="left:35px;top:359px;width:1px;height:153px;background:#111"></div>
<!-- View header -->
<div class="a" style="left:0;top:709px;width:249px;height:34px;background:#8ab0b2;border-top:2px solid #c8eaea;border-left:2px solid #c8eaea;border-right:1px solid #111;border-bottom:2px solid #111"></div>
<div class="t" style="left:0;top:717px;width:249px;text-align:center;font-size:16px;line-height:20px;font-weight:bold">View</div>

<!-- group boxes -->
<div class="gb" style="left:7px;top:758px;width:235px;height:9px"></div>
<div class="t" style="left:14px;top:750px;background:#c3c3c3;padding:0 2px;font-size:10px;letter-spacing:-0.2px">Domains</div>
<div class="gb" style="left:7px;top:789px;width:235px;height:88px"></div>
<div class="t" style="left:14px;top:781px;background:#c3c3c3;padding:0 2px;font-size:10px;letter-spacing:-0.2px">Display Options</div>
<div class="gb" style="left:7px;top:900px;width:235px;height:42px"></div>
<div class="t" style="left:14px;top:891px;background:#c3c3c3;padding:0 2px;font-size:10px;letter-spacing:-0.2px">Tools</div>
<div class="t" style="left:13px;top:811px;font-size:8px;color:#222">Scope:</div>

<!-- VIEW BUTTONS -->
<defs></defs><div class="a" style="left:38px;top:801px;width:91px;height:33px;border-top:1px solid #111;border-left:1px solid #111;border-right:1px solid #fff;border-bottom:1px solid #fff"></div>
<div class="a" style="left:39px;top:802px;width:29px;height:30px;background:#c3c3c3;border-top:1px solid #fff;border-left:1px solid #fff;border-right:1px solid #111;border-bottom:1px solid #111"></div><svg class="a" style="left:39px;top:802px" width="29" height="30"><defs><pattern id="ht" width="3" height="3" patternUnits="userSpaceOnUse" patternTransform="rotate(45)"><rect width="3" height="3" fill="#fff"/><rect width="1.4" height="3" fill="#222"/></pattern></defs><path d="M8 12 H19.5 V25.5 H8 Z" fill="url(#ht)" stroke="#111" stroke-width="2"/><path d="M8 12 L13 5.5 H26.5 V19.5 L19.5 25.5 M19.5 12 L26.5 5.5" fill="none" stroke="#111" stroke-width="2"/><text x="2" y="8" font-family="Liberation Mono" font-weight="bold" font-size="7" fill="#111">F</text></svg>
<div class="a" style="left:68px;top:802px;width:30px;height:30px;background:#c3c3c3;border-top:1px solid #fff;border-left:1px solid #fff;border-right:1px solid #111;border-bottom:1px solid #111"></div><svg class="a" style="left:68px;top:802px" width="30" height="30"><defs><pattern id="ht2" width="3" height="3" patternUnits="userSpaceOnUse" patternTransform="rotate(45)"><rect width="3" height="3" fill="#fff"/><rect width="1.4" height="3" fill="#222"/></pattern></defs><path d="M8 12 L13 5.5 H26.5 V19.5 L19.5 25.5 H8 Z" fill="url(#ht2)" stroke="#111" stroke-width="2"/><path d="M8 12 H19.5 V25.5 M19.5 12 L26.5 5.5" fill="none" stroke="#111" stroke-width="2"/><text x="2" y="8" font-family="Liberation Mono" font-weight="bold" font-size="7" fill="#111">B</text></svg>
<div class="a" style="left:98px;top:802px;width:30px;height:31px;background:#ffff28;border-top:2px solid #111;border-left:2px solid #111;border-right:1px solid #fff;border-bottom:1px solid #fff"></div><svg class="a" style="left:98px;top:802px" width="30" height="31"><path d="M4.5 12.5 H21.5 V20.5 H13.5 V27.5 H4.5 Z" fill="#ffffc8"/><path d="M4.5 12.5 L10.5 6.5 H26.5 L21.5 12.5 Z" fill="#ffff90"/><path d="M21.5 12.5 L26.5 6.5 V15.5 L21.5 20.5 Z" fill="#ffff70"/><path d="M4.5 12.5 V27.5 H13.5 M4.5 12.5 H21.5 V20.5 H13.5 V12.5 M18.5 12.5 V20.5 M10.5 6.5 H26.5 V15.5 L21.5 20.5 M4.5 12.5 L10.5 6.5 M21.5 12.5 L26.5 6.5 M13.5 12.5 L18.5 7 M10.5 6.5 V22.5 H13.5 M4.5 27.5 L10.5 22.5 M13.5 27.5 L18.5 22.5 H13.5" fill="none" stroke="#111" stroke-width="1"/><path d="M23.5 28 V24.5 H26" fill="none" stroke="#111" stroke-width="1.2"/><rect x="25" y="26" width="1" height="1" fill="#111"/></svg>
<div class="a" style="left:172px;top:801px;width:33px;height:33px;background:#c3c3c3;border-top:1px solid #fff;border-left:1px solid #fff;border-right:1px solid #111;border-bottom:1px solid #111"></div><svg class="a" style="left:172px;top:801px" width="33" height="33"><rect x="15.5" y="5.5" width="11" height="13" fill="#d030d8" stroke="#111"/><rect x="10.5" y="9.5" width="11" height="13" fill="#40e040" stroke="#111"/><rect x="5.5" y="13.5" width="12" height="14" fill="#ffff80" stroke="#111"/><path d="M9.5 14 V27 M13.5 14 V27 M6 18.5 H17 M6 22.5 H17" stroke="#111"/></svg>
<div class="a" style="left:13px;top:837px;width:91px;height:32px;border-top:1px solid #111;border-left:1px solid #111;border-right:1px solid #fff;border-bottom:1px solid #fff"></div>
<div class="a" style="left:14px;top:838px;width:29px;height:30px;background:#c3c3c3;border-top:1px solid #fff;border-left:1px solid #fff;border-right:1px solid #111;border-bottom:1px solid #111"></div><svg class="a" style="left:14px;top:838px" width="29" height="30"><path d="M5 5 L14 12 L22 20" stroke="#111" stroke-width="1.5" fill="none"/><rect x="2" y="3" width="5" height="5" fill="#111"/><rect x="11" y="10" width="5" height="5" fill="#111"/><rect x="19" y="18" width="5" height="5" fill="#111"/><g font-family="Liberation Mono" font-weight="bold" font-size="7" fill="#111"><text x="3" y="16">1</text><text x="10" y="24">2</text><text x="18" y="15">3</text></g></svg>
<div class="a" style="left:43px;top:838px;width:30px;height:30px;background:#c3c3c3;border-top:1px solid #fff;border-left:1px solid #fff;border-right:1px solid #111;border-bottom:1px solid #111"></div><svg class="a" style="left:43px;top:838px" width="30" height="30"><path d="M5 5 L14 12 L22 20" stroke="#111" stroke-width="1.5" fill="none"/><rect x="2" y="3" width="5" height="5" fill="#111"/><rect x="11" y="10" width="5" height="5" fill="#111"/><rect x="20" y="18" width="5" height="5" fill="#111"/></svg>
<div class="a" style="left:73px;top:838px;width:30px;height:31px;background:#ffff28;border-top:2px solid #111;border-left:2px solid #111;border-right:1px solid #fff;border-bottom:1px solid #fff"></div><svg class="a" style="left:73px;top:838px" width="30" height="31"><path d="M3 4 L10 9 L13 11 L25 23" stroke="#111" stroke-width="1.3" fill="none"/></svg>
<div class="a" style="left:106px;top:836px;width:45px;height:34px;border-top:1px solid #111;border-left:1px solid #111;border-right:1px solid #fff;border-bottom:1px solid #fff"></div>
<div class="a" style="left:107px;top:837px;width:33px;height:32px;background:#c3c3c3;border-top:1px solid #fff;border-left:1px solid #fff;border-right:1px solid #111;border-bottom:1px solid #111"></div><svg class="a" style="left:107px;top:837px" width="33" height="32"><path d="M5.1 14.3 L13.5 6.2 L27.8 18.3 L18.3 27.4 Z M5.1 14.3 H12.5 M12.5 6.5 V20.5 M18.3 9.5 V27.4 M17 9.5 L12.5 14.5 L18.3 20 L24.3 15.5 M12 20.3 H25" fill="none" stroke="#111" stroke-width="1.1"/></svg>
<div class="a" style="left:140px;top:837px;width:10px;height:32px;background:#c3c3c3;border-top:1px solid #fff;border-left:1px solid #fff;border-right:1px solid #111;border-bottom:1px solid #111"></div><svg class="a" style="left:140px;top:837px" width="10" height="32"><path d="M0 13.5 H9" stroke="#111" stroke-width="1"/><path d="M1.5 14 H8.5 L5 21 Z" fill="#fff"/><path d="M2 14.5 L4.5 20" fill="none" stroke="#111" stroke-width="1.3"/></svg>
<div class="a" style="left:156px;top:836px;width:66px;height:34px;border-top:1px solid #111;border-left:1px solid #111;border-right:1px solid #fff;border-bottom:1px solid #fff"></div>
<div class="a" style="left:157px;top:837px;width:33px;height:32px;background:#c3c3c3;border-top:1px solid #fff;border-left:1px solid #fff;border-right:1px solid #111;border-bottom:1px solid #111"></div><svg class="a" style="left:157px;top:837px" width="33" height="32"><defs><pattern id="dg" width="2" height="2" patternUnits="userSpaceOnUse"><rect width="2" height="2" fill="#f0f0f0"/><rect width="1" height="1" fill="#222"/><rect x="1" y="1" width="1" height="1" fill="#333"/></pattern></defs><path d="M6.5 14.5 L14.5 7.5 L26 18.3 L18.3 26 Z" fill="url(#dg)" stroke="#111" stroke-width="3" stroke-linejoin="miter"/></svg>
<div class="a" style="left:190px;top:837px;width:32px;height:32px;background:#c3c3c3;border-top:1px solid #fff;border-left:1px solid #fff;border-right:1px solid #111;border-bottom:1px solid #111"></div><svg class="a" style="left:190px;top:837px" width="32" height="32"><path d="M4 20 C3 13 9 9.5 16 9.5 C23 9.5 28 12 28 17 C28 19 25 20 22 19.5 C19.5 19.2 19 21 19 23 C19 26 14 27.5 10 27 C6 26.5 4.5 24 4 20 Z" fill="#d4a838"/><ellipse cx="15" cy="16" rx="8" ry="4.5" fill="#e6c462"/><ellipse cx="10" cy="16" rx="2.5" ry="1.7" fill="#3a9a28"/><ellipse cx="16.5" cy="12.5" rx="2.8" ry="1.8" fill="#d88a40"/><ellipse cx="23" cy="15.5" rx="2.5" ry="1.6" fill="#607088"/><path d="M13 21 L25 9" stroke="#f4e8b0" stroke-width="1.2"/></svg>
<div class="a" style="left:9px;top:906px;width:37px;height:33px;background:#c3c3c3;border-top:1px solid #fff;border-left:1px solid #fff;border-right:1px solid #111;border-bottom:1px solid #111"></div><svg class="a" style="left:9px;top:906px" width="37" height="33"><rect x="3.5" y="8.5" width="28" height="19" rx="3" fill="#d8d8d8" stroke="#333" stroke-width="1.2"/><rect x="8" y="5.5" width="9" height="4" rx="1" fill="#bbb" stroke="#333"/><circle cx="17.5" cy="18" r="7.5" fill="#eee" stroke="#555"/><circle cx="17.5" cy="18" r="5" fill="#3a2a7a"/><circle cx="16" cy="16.5" r="1.5" fill="#9a8ae0"/><circle cx="27" cy="12" r="1" fill="#d02020"/></svg>
<div class="a" style="left:46px;top:906px;width:32px;height:33px;background:#c3c3c3;border-top:1px solid #fff;border-left:1px solid #fff;border-right:1px solid #111;border-bottom:1px solid #111"></div><svg class="a" style="left:46px;top:906px" width="32" height="33"><path d="M5 22 L23 7 L29 13 L11 28 Z" fill="#e8e080" stroke="#222" stroke-width="1.5"/><path d="M9 19 L11 21 M13 16 L15 18 M17 13 L19 15 M21 10 L23 12" stroke="#555"/></svg>
<div class="a" style="left:78px;top:906px;width:34px;height:33px;background:#c3c3c3;border-top:1px solid #fff;border-left:1px solid #fff;border-right:1px solid #111;border-bottom:1px solid #111"></div><svg class="a" style="left:78px;top:906px" width="34" height="33"><g font-family="Liberation Serif" font-weight="bold" font-size="10" fill="#111"><text x="6" y="13">X</text><text x="6" y="22">Y</text><text x="6" y="31">Z</text></g><g fill="#111"><rect x="17" y="10" width="1.5" height="1.5"/><rect x="21" y="10" width="1.5" height="1.5"/><rect x="25" y="10" width="1.5" height="1.5"/><rect x="17" y="19" width="1.5" height="1.5"/><rect x="21" y="19" width="1.5" height="1.5"/><rect x="25" y="19" width="1.5" height="1.5"/><rect x="17" y="28" width="1.5" height="1.5"/><rect x="21" y="28" width="1.5" height="1.5"/><rect x="25" y="28" width="1.5" height="1.5"/></g></svg>

<div class="a" style="left:245px;top:31px;width:9px;height:9px;background:#ececec;border:1px solid #fff;border-right-color:#a0a0a0;border-bottom-color:#a0a0a0"></div>
<!-- stats -->
<div class="a" style="left:0;top:949px;width:249px;height:33px;background:#fefee0;border-top:2px solid #111;border-left:2px solid #111;border-right:1px solid #f4f4f4"></div>
<div class="t" style="left:5px;top:952px;font-size:9.6px">Total number of cells:</div>
<div class="t" style="left:5px;top:966px;font-size:9.6px">Total number of vertices:</div>
<div class="t" style="left:150px;top:952px;width:95px;text-align:right;font-size:9.6px">5 535 561</div>
<div class="t" style="left:150px;top:966px;width:95px;text-align:right;font-size:9.6px">6 067 071</div>
</body></html>
